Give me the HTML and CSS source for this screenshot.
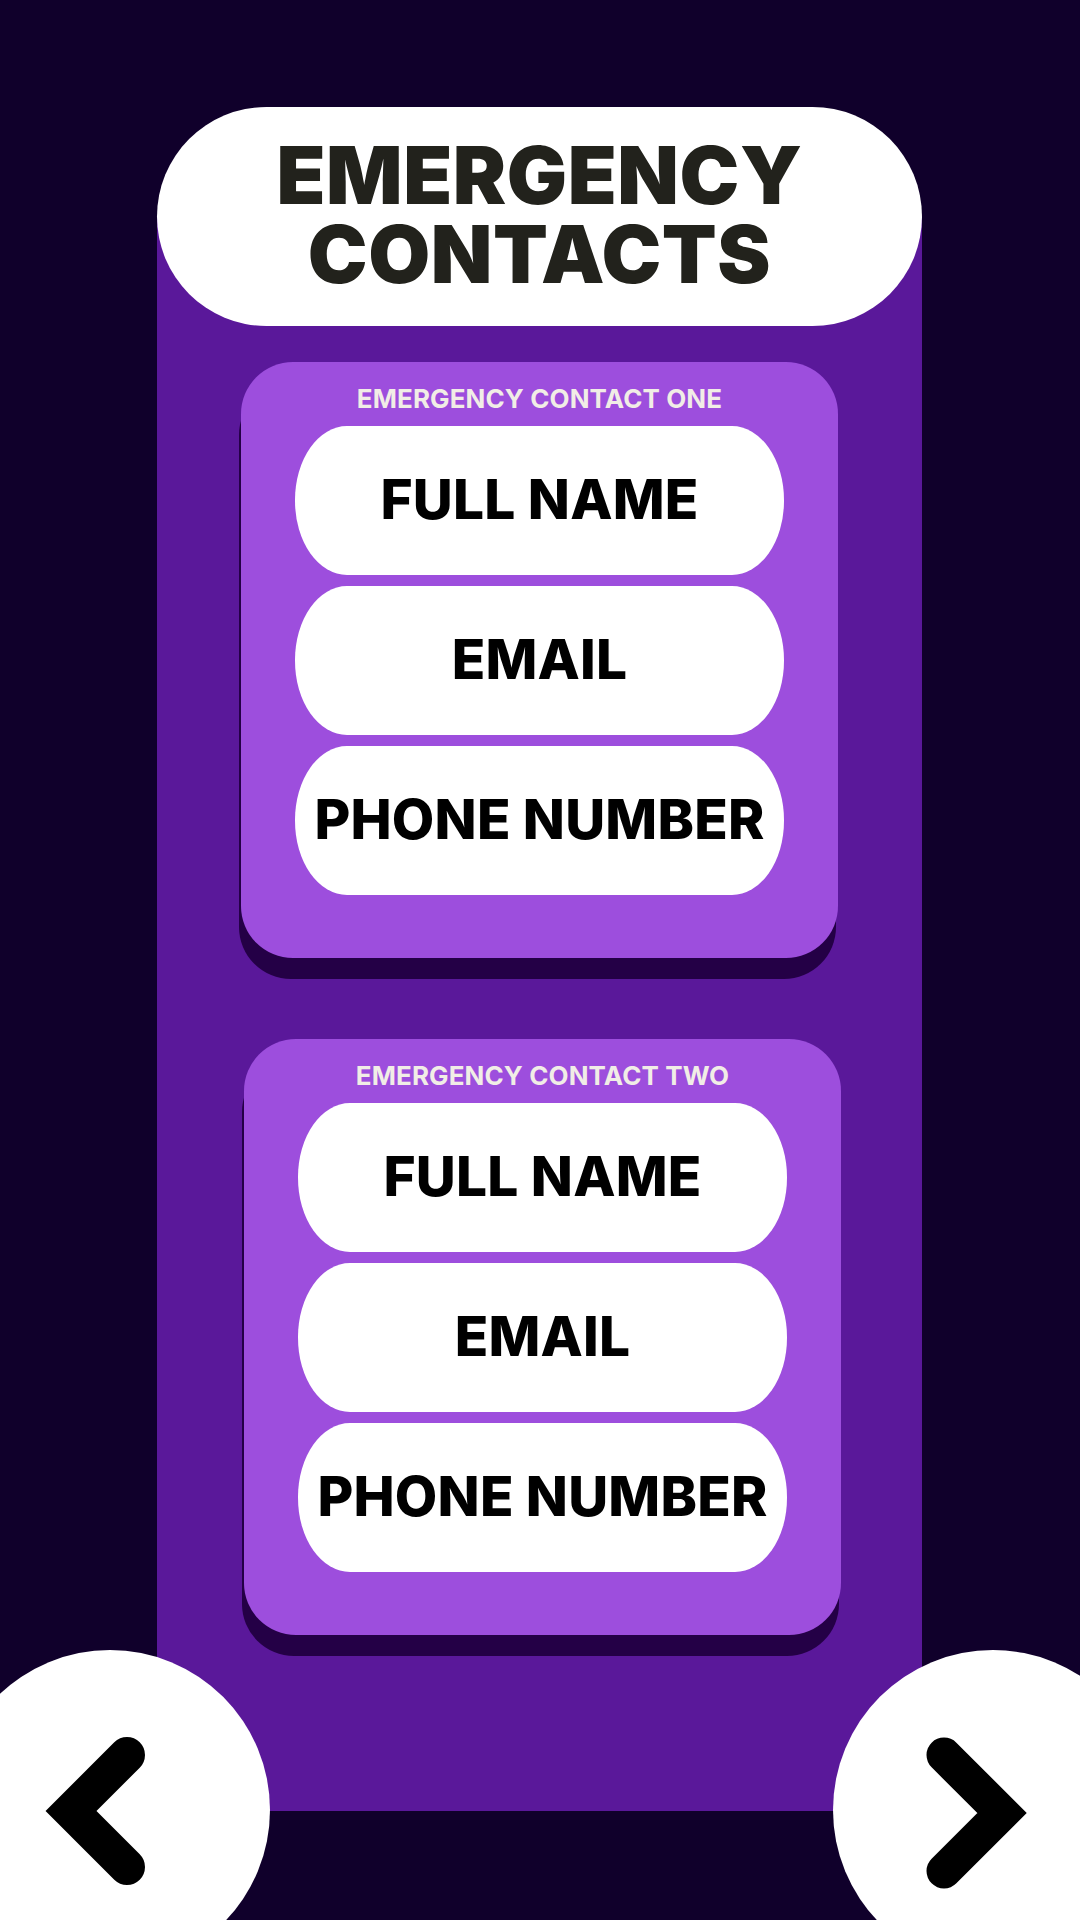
FILE: index.html
```html
<!DOCTYPE html>
<html lang="en">
<head>
<meta charset="utf-8">
<title>Emergency Contacts</title>
<link rel="stylesheet" href="styles.css">
</head>
<body>
<div class="screen">
  <main class="panel">
    <header class="title-pill">
      <h1 class="title"><span class="title-line">EMERGENCY</span><span class="title-line">CONTACTS</span></h1>
    </header>

    <section class="card card-one">
      <h2 class="card-label">EMERGENCY CONTACT ONE</h2>
      <div class="fields">
        <div class="field">FULL NAME</div>
        <div class="field">EMAIL</div>
        <div class="field field-phone">PHONE NUMBER</div>
      </div>
    </section>

    <section class="card card-two">
      <h2 class="card-label">EMERGENCY CONTACT TWO</h2>
      <div class="fields">
        <div class="field">FULL NAME</div>
        <div class="field">EMAIL</div>
        <div class="field field-phone">PHONE NUMBER</div>
      </div>
    </section>
  </main>

  <button class="nav nav-prev" aria-label="Previous">
    <svg width="320" height="320" viewBox="0 0 320 320"><polyline points="177,105 121,161 177,217" fill="none" stroke="#000" stroke-width="36" stroke-linecap="round" stroke-linejoin="miter"/></svg>
  </button>
  <button class="nav nav-next" aria-label="Next">
    <svg width="320" height="320" viewBox="0 0 320 320"><polyline points="111,105 169,163 111,221" fill="none" stroke="#000" stroke-width="35" stroke-linecap="round" stroke-linejoin="miter"/></svg>
  </button>
</div>
</body>
</html>
```

FILE: styles.css
```css
html, body {
  margin: 0;
  padding: 0;
  width: 1080px;
  height: 1920px;
  overflow: hidden;
  background: #10002b;
}

.screen {
  position: relative;
  width: 1080px;
  height: 1920px;
  padding-top: 107px;
  box-sizing: border-box;
  overflow: hidden;
  font-family: Inter, "Liberation Sans", sans-serif;
}

.panel {
  margin-left: 157px;
  width: 765px;
  height: 1704px;
  background: linear-gradient(to bottom, transparent 110px, #5a189a 110px);
  display: flex;
  flex-direction: column;
}

.title-pill {
  height: 219px;
  background: #ffffff;
  border-radius: 110px;
  display: flex;
  align-items: center;
  justify-content: center;
  padding-bottom: 5px;
  box-sizing: border-box;
}

.title {
  margin: 0;
  display: flex;
  flex-direction: column;
  align-items: center;
  font-size: 80px;
  font-weight: 900;
  color: #22221c;
  letter-spacing: 0.6px;
}

.title-line {
  display: block;
  height: 79px;
  line-height: 79px;
}

.card {
  width: 597px;
  background: #9d4edd;
  border-radius: 52px;
  box-shadow: -2px 21px 0 #240046;
  padding: 23px 0 63px;
  box-sizing: border-box;
  display: flex;
  flex-direction: column;
  align-items: center;
}

.card-one {
  margin: 36px 0 0 84px;
}

.card-two {
  margin: 81px 0 0 87px;
}

.card-label {
  margin: 0 0 14px;
  font-size: 26px;
  line-height: 27px;
  font-weight: 700;
  color: #f1ede6;
  letter-spacing: 0.1px;
}

.fields {
  display: flex;
  flex-direction: column;
  gap: 11px;
}

.field {
  width: 489px;
  height: 149px;
  background: #ffffff;
  border-radius: 52px / 74px;
  display: flex;
  align-items: center;
  justify-content: center;
  padding-bottom: 3px;
  box-sizing: border-box;
  font-size: 55px;
  font-weight: 800;
  color: #000000;
  letter-spacing: 0.2px;
  white-space: nowrap;
}

.nav {
  position: absolute;
  top: 1650px;
  width: 320px;
  height: 320px;
  padding: 0;
  border: none;
  border-radius: 50%;
  background: #ffffff;
  cursor: pointer;
}

.nav svg {
  display: block;
}

.nav-prev {
  left: -50px;
}

.nav-next {
  left: 833px;
}
```
